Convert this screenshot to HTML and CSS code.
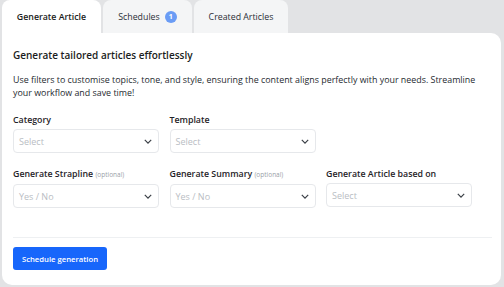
FILE: index.html
```html
<!DOCTYPE html>
<html>
<head>
<meta charset="utf-8">
<link rel="stylesheet" href="styles.css">
</head>
<body>
<div class="page">
  <div class="tabs">
    <div class="tab active">Generate Article</div>
    <div class="tab">Schedules <span class="badge">1</span></div>
    <div class="tab">Created Articles</div>
  </div>
  <div class="card">
    <h1 class="title">Generate tailored articles effortlessly</h1>
    <p class="desc">Use filters to customise topics, tone, and style, ensuring the content aligns perfectly with your needs. Streamline your workflow and save time!</p>
    <div class="grid">
      <div class="field">
        <label class="label">Category</label>
        <div class="select"><span>Select</span><svg class="chev" viewBox="0 0 10 6"><path d="M1 1l4 4 4-4" /></svg></div>
      </div>
      <div class="field">
        <label class="label">Template</label>
        <div class="select"><span>Select</span><svg class="chev" viewBox="0 0 10 6"><path d="M1 1l4 4 4-4" /></svg></div>
      </div>
      <div class="field empty"></div>
      <div class="field">
        <label class="label">Generate Strapline <span class="opt">(optional)</span></label>
        <div class="select"><span>Yes / No</span><svg class="chev" viewBox="0 0 10 6"><path d="M1 1l4 4 4-4" /></svg></div>
      </div>
      <div class="field">
        <label class="label">Generate Summary <span class="opt">(optional)</span></label>
        <div class="select"><span>Yes / No</span><svg class="chev" viewBox="0 0 10 6"><path d="M1 1l4 4 4-4" /></svg></div>
      </div>
      <div class="field">
        <label class="label">Generate Article based on</label>
        <div class="select"><span>Select</span><svg class="chev" viewBox="0 0 10 6"><path d="M1 1l4 4 4-4" /></svg></div>
      </div>
    </div>
    <div class="divider"></div>
    <button class="btn">Schedule generation</button>
  </div>
</div>
</body>
</html>
```
FILE: styles.css
```css
* { box-sizing: border-box; }
html, body { margin: 0; padding: 0; }
body {
  background: #e2e3e5;
  font-family: "Open Sans", "Noto Sans", sans-serif;
  color: #1f2328;
  width: 504px;
  height: 287px;
  overflow: hidden;
}
.page { padding-left: 2px; }
.tabs { display: flex; gap: 2px; height: 33px; }
.tab {
  flex: none;
  height: 33px;
  display: flex;
  align-items: center;
  justify-content: center;
  gap: 5px;
  padding: 0;
  font-size: 8.8px;
  white-space: nowrap;
  color: #2b2f36;
  background: #f4f5f6;
  border-radius: 8px 8px 0 0;
}
.tab:nth-child(1) { width: 99px; }
.tab:nth-child(2) { width: 89px; }
.tab:nth-child(3) { width: 94px; }
.tab.active { background: #fff; font-weight: 600; color: #1a1d21; }
.badge {
  flex: none;
  width: 12px; height: 12px; border-radius: 50%;
  background: #6a9cf5; color: #fff;
  font-size: 7px; font-weight: 700; line-height: 12px;
  display: inline-flex; align-items: center; justify-content: center;
}
.card {
  background: #fff;
  width: 499px;
  height: 252px;
  border-radius: 0 10px 10px 10px;
  padding: 15px 10px 0 11px;
}
.title {
  margin: 0;
  font-size: 10px;
  font-weight: 600;
  line-height: 14px;
  color: #1a1d21;
}
.desc {
  margin: 11px 0 0;
  max-width: 470px;
  font-size: 8.9px;
  line-height: 13px;
  color: #262a30;
}
.grid {
  display: grid;
  grid-template-columns: repeat(3, 146px);
  column-gap: 10.5px;
  row-gap: 15px;
  margin-top: 15px;
}
.label {
  display: block;
  font-size: 8.8px;
  font-weight: 600;
  line-height: 12px;
  color: #1f2328;
  margin-bottom: 3px;
}
.opt { font-size: 6.5px; font-weight: 400; color: #9aa0a8; }
.select {
  height: 24px;
  border: 1px solid #e6e8eb;
  border-radius: 4px;
  display: flex;
  align-items: center;
  justify-content: space-between;
  padding: 0 6px 0 5px;
  font-size: 9px;
  color: #b9bdc3;
}
.chev { width: 8px; height: 5px; fill: none; stroke: #3a3f46; stroke-width: 1.5; }
.divider { height: 1px; background: #eef0f2; margin-top: 29px; width: 479px; }
.btn {
  display: block;
  margin-top: 9px;
  width: 94px;
  height: 23px;
  background: #1766fb;
  color: #fff;
  border: none;
  border-radius: 3px;
  font-family: "Open Sans", sans-serif;
  font-size: 7.7px;
  font-weight: 600;
  padding: 0;
}
```
